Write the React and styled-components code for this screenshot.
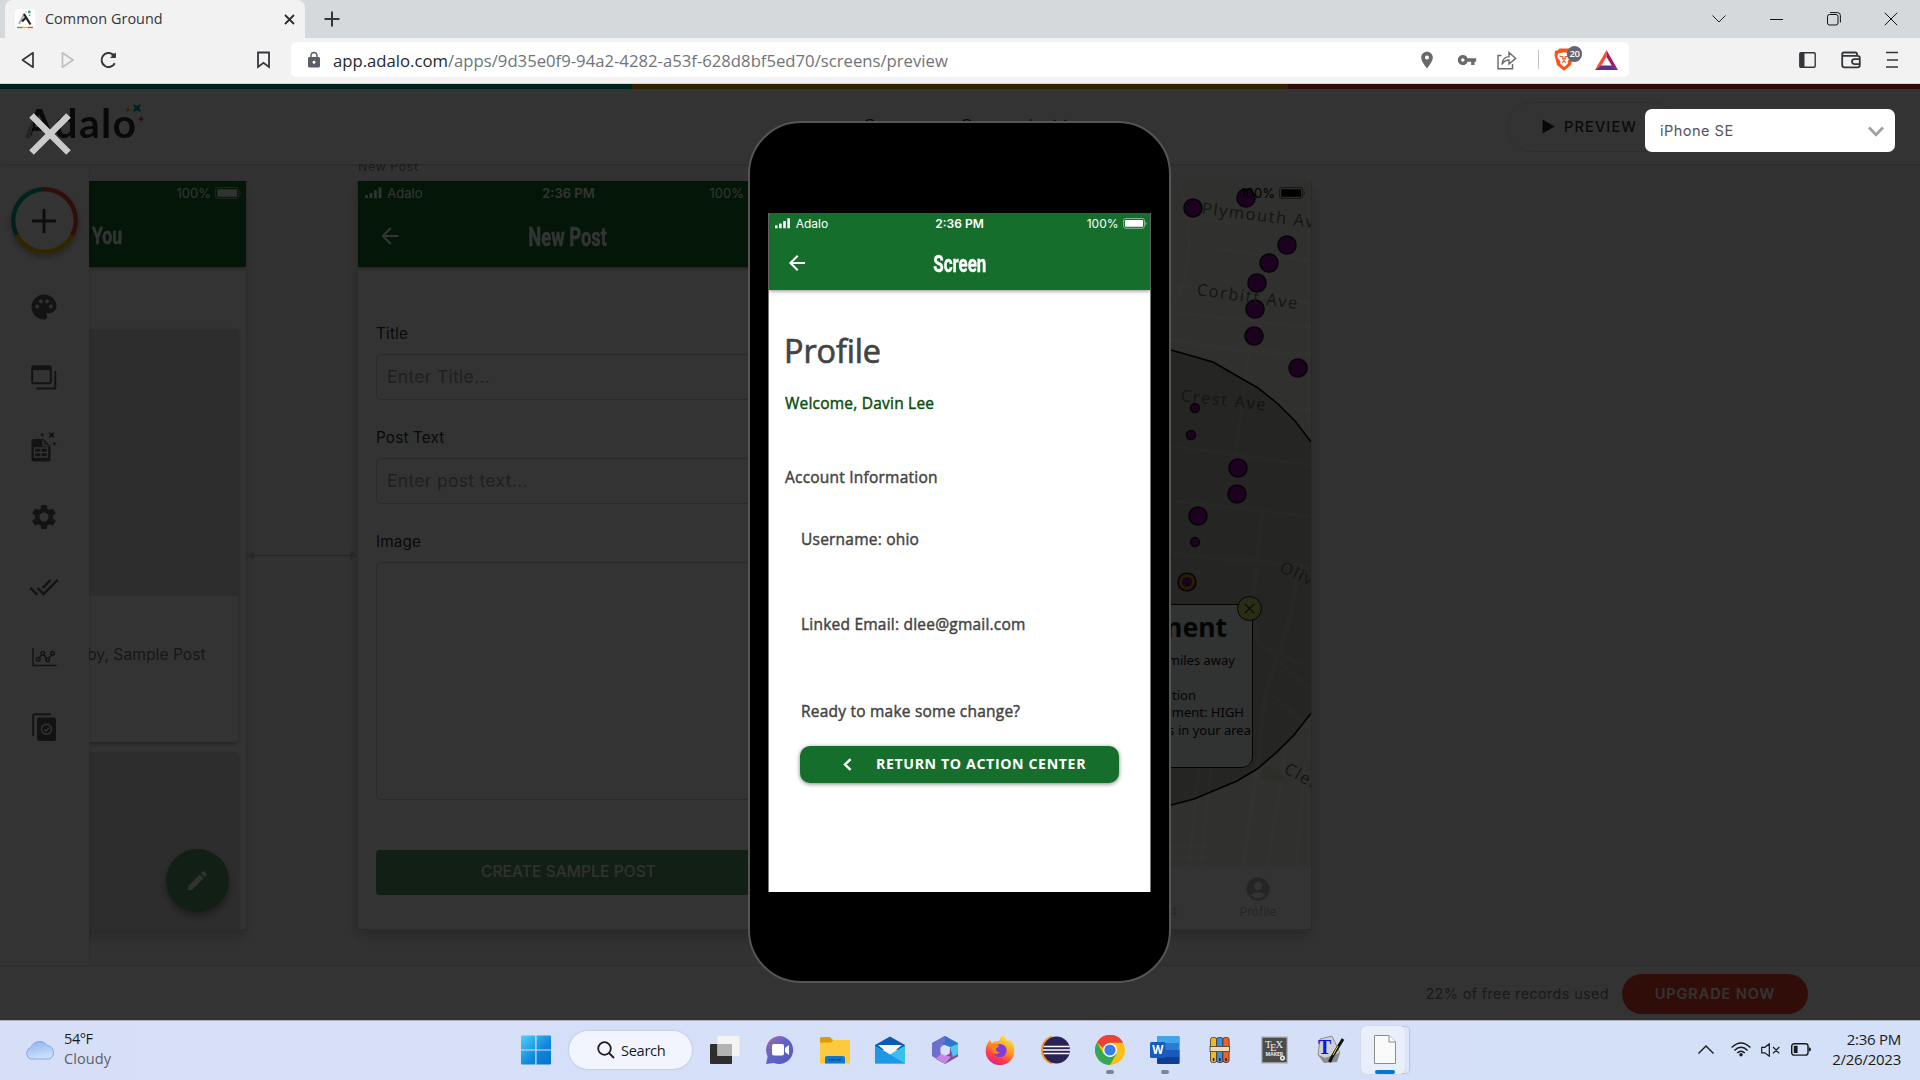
import styled, { createGlobalStyle } from "styled-components";
import {
  MdPalette,
  MdSettings,
  MdDoneAll,
  MdEdit,
  MdAccountCircle,
  MdArrowBack,
  MdLocationOn,
  MdVpnKey,
  MdLock,
} from "react-icons/md";

const GlobalStyle = createGlobalStyle`
  * {
    box-sizing: border-box;
  }
  body {
    margin: 0;
    overflow: hidden;
    font-family: "Open Sans", "Noto Sans", sans-serif;
  }
  svg {
    display: block;
    flex: none;
  }
`;

const Page = styled.div`
  width: 1920px;
  height: 1080px;
  display: flex;
  flex-direction: column;
  overflow: hidden;
`;

/* ---------- text ---------- */

const Text = styled.span`
  font-size: ${(p) => p.$size || 15}px;
  font-weight: ${(p) => p.$weight || 400};
  letter-spacing: ${(p) => p.$spacing || 0}px;
  color: ${(p) => p.$color || "inherit"};
  line-height: 20px;
  white-space: nowrap;
`;

/* ---------- browser ---------- */

const TabStrip = styled.div`
  height: 38px;
  flex: none;
  display: flex;
  align-items: center;
  padding-left: 5px;
  background: #d5d9dc;
`;
const Tab = styled.div`
  width: 300px;
  height: 38px;
  display: flex;
  align-items: center;
  gap: 10px;
  padding: 0 10px 0 10px;
  border-radius: 8px 8px 0 0;
  background: #f2f2f2;
  color: #33373b;
`;
const TabTitle = styled(Text)`
  flex: 1;
`;
const NewTab = styled.div`
  margin-left: 19px;
`;
const WindowButtons = styled.div`
  display: flex;
  margin-left: auto;
`;
const WindowButton = styled.div`
  width: 57.3px;
  height: 38px;
  display: flex;
  align-items: center;
  justify-content: center;
`;
const Toolbar = styled.div`
  height: 46px;
  flex: none;
  display: flex;
  align-items: center;
  padding: 0 22px 2px 20px;
  background: #f2f2f2;
  border-bottom: 1px solid #d4d4d4;
`;
const NavButtons = styled.div`
  width: 271px;
  display: flex;
  align-items: center;
`;
const NavButton = styled.div`
  width: 40px;
`;
const BookmarkSlot = styled.div`
  margin-left: 136px;
`;
const AddressBar = styled.div`
  width: 1338px;
  height: 35px;
  display: flex;
  align-items: center;
  padding: 0 11px 0 14px;
  border-radius: 5px;
  background: #fff;
`;
const Url = styled(Text)`
  margin-left: 10px;
  padding-top: 2px;
  flex: 1;
`;
const AddressActions = styled.div`
  display: flex;
  align-items: center;
  gap: 20px;
  color: #6a6a6a;
`;
const Divider = styled.div`
  width: 1px;
  height: 19px;
  margin-left: 1px;
  margin-right: -5px;
  background: #c4c4c4;
`;
const Brave = styled.div`
  position: relative;
  width: 21px;
`;
const BraveBadge = styled.span`
  position: absolute;
  left: 13px;
  top: -2px;
  width: 15px;
  height: 16px;
  border-radius: 8px;
  background: #626674;
  color: #fff;
  font-size: 9.5px;
  font-weight: 600;
  line-height: 16px;
  text-align: center;
  letter-spacing: -0.5px;
`;
const ToolbarEnd = styled.div`
  display: flex;
  align-items: center;
  gap: 25px;
  margin-left: auto;
`;

/* ---------- adalo editor ---------- */

const Editor = styled.div`
  position: relative;
  height: 936px;
  flex: none;
  display: flex;
  flex-direction: column;
  overflow: hidden;
  background: #fbfbfb;
  font-family: Inter, sans-serif;
`;
const ColorStrip = styled.div`
  height: 5px;
  flex: none;
  background: linear-gradient(90deg, #00a898 632px, #f0ab00 632px 1288px, #f03a2e 1288px);
`;
const EditorHeader = styled.div`
  position: relative;
  z-index: 2;
  height: 75px;
  flex: none;
  display: flex;
  align-items: center;
  padding: 0 25px;
  background: #fff;
  box-shadow: 0 1px 3px rgba(0, 0, 0, 0.2);
`;
const Logo = styled.div`
  display: flex;
  align-items: flex-start;
  width: 837px;
`;
const LogoText = styled.span`
  font-family: Lato, sans-serif;
  font-size: 41px;
  font-weight: 700;
  line-height: 44px;
  letter-spacing: 1.3px;
  margin-top: -7px;
  color: transparent;
  background: linear-gradient(100deg, #b5b5b5 12px, #2d2d2d 12px);
  background-clip: text;
`;
const LogoSparks = styled.svg`
  margin: -4px 0 0 -13px;
`;
const AppTitle = styled.span`
  display: flex;
  align-items: center;
  gap: 19px;
  font-size: 20.5px;
  font-weight: 300;
  letter-spacing: 0.6px;
  color: #222;
`;
const PreviewButton = styled.div`
  display: flex;
  align-items: center;
  gap: 9px;
  width: 170px;
  height: 50px;
  margin-left: auto;
  padding-left: 34px;
  border: 1px solid #e4e4e4;
  border-radius: 25px;
  color: #333;
`;
const Avatar = styled.div`
  width: 36px;
  height: 36px;
  margin: 0 32px 0 150px;
  border-radius: 18px;
  background: #00a898;
`;
const EditorBody = styled.div`
  flex: 1;
  display: flex;
  min-height: 0;
`;
const Sidebar = styled.div`
  position: relative;
  z-index: 1;
  width: 89px;
  flex: none;
  display: flex;
  flex-direction: column;
  align-items: center;
  padding: 23px 2px 0 0;
  background: #fff;
  box-shadow: 1px 0 3px rgba(0, 0, 0, 0.12);
  color: #606060;
`;
const AddButton = styled.div`
  width: 67px;
  height: 67px;
  flex: none;
  display: flex;
  align-items: center;
  justify-content: center;
  margin: 0 0 18px 1px;
  border-radius: 50%;
  background:
    radial-gradient(circle, #fff 28.5px, transparent 29.5px),
    conic-gradient(#f0492e 118deg, #f5b800 118deg 242deg, #00a898 242deg);
  box-shadow: 0 3px 6px rgba(0, 0, 0, 0.35);
`;
const SideItem = styled.div`
  height: 70px;
  display: flex;
  align-items: center;
  justify-content: center;
`;
const Canvas = styled.div`
  position: relative;
  flex: 1;
  overflow: hidden;
`;
const CanvasScreen = styled.div`
  position: absolute;
  left: ${(p) => p.$x}px;
  top: 17px;
  width: ${(p) => p.$w}px;
  height: 749px;
  overflow: hidden;
  background: #fff;
  border: 1px solid #d2d2d2;
  border-top: none;
`;
const ScreenShadow = styled.div`
  position: absolute;
  left: ${(p) => p.$x}px;
  top: 17px;
  width: ${(p) => p.$w}px;
  height: 749px;
  box-shadow: 0 6px 14px rgba(0, 0, 0, 0.22);
`;
const ScreenLabel = styled.div`
  position: absolute;
  left: 269px;
  top: -7px;
  font-size: 12.4px;
  line-height: 20px;
  letter-spacing: 0.6px;
  color: #8a8a8a;
`;
const LinkArrow = styled.svg`
  position: absolute;
  left: 157px;
  top: 386px;
`;
const NavHeader = styled.div`
  height: ${(p) => p.$h}px;
  background: #166e2c;
  color: #fff;
  box-shadow: 0 1px 4px rgba(0, 0, 0, 0.45);
  position: relative;
`;
const StatusRow = styled.div`
  height: ${(p) => p.$h}px;
  display: grid;
  grid-template-columns: 1fr auto 1fr;
  align-items: center;
  padding: 0 3px 0 ${(p) => p.$pad}px;
  font-family: Inter, sans-serif;
  font-size: ${(p) => p.$size}px;
`;
const StatusTime = styled(Text)`
  margin-left: -3px;
`;
const StatusLeft = styled.div`
  display: flex;
  align-items: center;
  gap: 5px;
`;
const StatusRight = styled.div`
  display: flex;
  align-items: center;
  justify-content: flex-end;
  gap: 4px;
`;
const TitleRow = styled.div`
  height: ${(p) => p.$h}px;
  display: grid;
  grid-template-columns: 50px 1fr 50px;
  align-items: center;
  padding: 0 ${(p) => p.$pad}px;
`;
const NavTitle = styled.span`
  justify-self: center;
  padding-top: 2px;
  font-family: Roboto, sans-serif;
  font-size: ${(p) => p.$size}px;
  font-weight: 700;
  white-space: nowrap;
  transform: scaleX(0.72);
  -webkit-text-stroke: 0.4px currentColor;
`;
const FeedHeader = styled(NavHeader)`
  padding-left: 3px;
`;
const FeedTitle = styled(NavTitle)`
  display: block;
  width: max-content;
  padding-top: 16px;
  justify-self: start;
  transform-origin: left;
`;
const FeedStatus = styled.div`
  height: 24px;
  display: flex;
  align-items: center;
  justify-content: flex-end;
  gap: 4px;
  padding-right: 4px;
  font-size: 13px;
`;
const FeedCard = styled.div`
  width: 149px;
  height: ${(p) => p.$h}px;
  margin-top: ${(p) => p.$top}px;
  box-shadow: 0 2px 4px rgba(0, 0, 0, 0.35);
  border-radius: 0 4px 4px 0;
  background: #fff;
`;
const FeedImage = styled.div`
  height: ${(p) => p.$h}px;
  background: #e1e1e1;
`;
const FeedText = styled.div`
  margin: 47px 0 0 -2px;
  font-size: 15.7px;
  line-height: 24px;
  white-space: nowrap;
  color: #777;
`;
const Fab = styled.div`
  position: absolute;
  left: 77px;
  top: 668px;
  width: 63px;
  height: 63px;
  display: flex;
  align-items: center;
  justify-content: center;
  border-radius: 50%;
  background: #5c996b;
  color: #f4f4f4;
  box-shadow: 0 4px 8px rgba(0, 0, 0, 0.4);
`;
const PostForm = styled.div`
  padding: 54px 17px 0 18px;
`;
const FieldLabel = styled.div`
  height: 24px;
  margin-bottom: 9px;
  font-size: 15.3px;
  line-height: 26px;
  letter-spacing: 0.15px;
  color: #333;
`;
const Field = styled.div`
  height: ${(p) => p.$h || 46}px;
  margin-bottom: ${(p) => p.$gap || 25}px;
  padding: 0 10px;
  border: 1px solid #d0d0d0;
  border-radius: 5px;
  font-size: 17.5px;
  line-height: 44px;
  letter-spacing: 0.3px;
  color: #a0a0a0;
`;
const PostButton = styled.div`
  height: 45px;
  border-radius: 4px;
  background: #5c996b;
  color: #f4f4f4;
  font-size: 15.5px;
  font-weight: 500;
  line-height: 43px;
  letter-spacing: 0.1px;
  text-align: center;
`;
const MapArea = styled.div`
  position: relative;
  height: 686px;
  background: #eeeee6;
`;
const MapDrawing = styled.svg`
  position: absolute;
  left: 0;
  top: 0;
`;
const MapStatus = styled.div`
  position: absolute;
  right: 5px;
  top: 0;
  height: 24px;
  display: flex;
  align-items: center;
  gap: 4px;
  font-size: 13px;
  color: #000;
`;
const StreetName = styled.span`
  position: absolute;
  left: ${(p) => p.$x}px;
  top: ${(p) => p.$y}px;
  font-family: "Open Sans", sans-serif;
  font-size: 16.5px;
  line-height: 20px;
  letter-spacing: 1.6px;
  white-space: nowrap;
  color: #6c6c6c;
  transform: rotate(${(p) => p.$angle}deg);
  transform-origin: left center;
`;
const MapPopup = styled.div`
  position: absolute;
  right: 58px;
  top: 423px;
  width: 180px;
  height: 164px;
  padding-top: 5px;
  border: 1px solid #111;
  border-radius: 11px;
  background: #f2faf9;
  color: #151515;
  text-align: right;
  font-family: "Noto Sans", sans-serif;
`;
const PopupTitle = styled.div`
  height: 42px;
  padding-right: 25px;
  font-size: 26.5px;
  font-weight: 700;
  line-height: 34px;
`;
const PopupLine = styled.div`
  height: 17.6px;
  margin-bottom: ${(p) => p.$gap || 0}px;
  padding-right: ${(p) => p.$end}px;
  font-size: 13px;
  line-height: 17.6px;
  white-space: nowrap;
`;
const PopupClose = styled.div`
  position: absolute;
  right: -10px;
  top: -9px;
  width: 25px;
  height: 25px;
  display: flex;
  align-items: center;
  justify-content: center;
  border: 1px solid #111;
  border-radius: 50%;
  background: #d8dc70;
`;
const TabBar = styled.div`
  height: 62px;
  display: grid;
  grid-template-columns: 288px 158px;
  background: #fff;
  color: #bababa;
  font-size: 12px;
  line-height: 17px;
`;
const TabItem = styled.div`
  display: flex;
  flex-direction: column;
  align-items: center;
  padding-top: 8px;
  width: 105px;
  justify-self: ${(p) => p.$side || "start"};
`;
const TabTextOnly = styled(TabItem)`
  width: auto;
  padding: 35px 2px 0 0;
`;
const EditorFooter = styled.div`
  position: relative;
  z-index: 2;
  height: 55px;
  flex: none;
  display: flex;
  align-items: center;
  justify-content: flex-end;
  gap: 13px;
  padding: 1px 112px 0 0;
  border-top: 1px solid #dcdcdc;
  background: #fff;
`;
const UpgradeButton = styled.div`
  width: 186px;
  height: 40px;
  border-radius: 20px;
  background: #f04430;
  color: #fff;
  font-size: 14.6px;
  font-weight: 600;
  line-height: 40px;
  letter-spacing: 0.85px;
  text-align: center;
`;

/* ---------- preview overlay ---------- */

const Overlay = styled.div`
  position: absolute;
  inset: 0;
  z-index: 5;
  display: flex;
  align-items: center;
  justify-content: center;
  background: rgba(0, 0, 0, 0.8);
`;
const CloseButton = styled.div`
  position: absolute;
  left: 29px;
  top: 29px;
`;
const DeviceSelect = styled.div`
  position: absolute;
  right: 25px;
  top: 25px;
  width: 250px;
  height: 43px;
  display: flex;
  align-items: center;
  justify-content: space-between;
  padding: 1px 11px 0 15px;
  border-radius: 7px;
  background: #fff;
`;
const Phone = styled.div`
  width: 423px;
  height: 862px;
  margin-right: 1px;
  padding: 90px 18px 0;
  border: 2px solid #555;
  border-radius: 53px;
  background: #000;
`;
const PhoneScreen = styled.div`
  height: 679px;
  border: 1px solid #777;
  border-width: 0 1px;
  background: #fff;
`;
const ProfileBody = styled.div`
  padding: 0 16px;
  display: flex;
  flex-direction: column;
`;
const ProfileTitle = styled.div`
  margin: 36px 0 0 -1px;
  font-family: "Open Sans", sans-serif;
  font-size: 32.4px;
  line-height: 48px;
  letter-spacing: -0.1px;
  color: #444;
  -webkit-text-stroke: 0.7px currentColor;
`;
const ProfileLine = styled.div`
  margin: ${(p) => p.$top}px 0 0 ${(p) => p.$indent || 0}px;
  height: 24px;
  font-family: "Open Sans", sans-serif;
  font-size: 15.5px;
  line-height: 24px;
  letter-spacing: 0.22px;
  white-space: nowrap;
  color: ${(p) => p.$color || "#444"};
  -webkit-text-stroke: 0.45px currentColor;
`;
const ReturnButton = styled.div`
  width: 319px;
  height: 37px;
  margin: 23px 0 0 15px;
  display: flex;
  align-items: center;
  padding: 0 0 1px 43px;
  gap: 24px;
  border-radius: 10px;
  background: #166e2c;
  color: #fff;
  font-family: "Open Sans", sans-serif;
  box-shadow: 0 1px 4px rgba(0, 0, 0, 0.5);
`;

/* ---------- windows taskbar ---------- */

const Taskbar = styled.div`
  height: 60px;
  flex: none;
  display: flex;
  align-items: center;
  padding-bottom: 2px;
  border-top: 1px solid #a9aebb;
  background: linear-gradient(90deg, #d7dff7, #d3e0f8);
`;
const Weather = styled.div`
  width: 509px;
  display: flex;
  align-items: center;
  gap: 9px;
  padding-left: 25px;
`;
const TwoLines = styled.div`
  display: flex;
  flex-direction: column;
  align-items: ${(p) => p.$align || "flex-start"};
  margin-top: -1px;
  color: #1a1a1a;
`;
const StartSlot = styled.div`
  width: 60px;
  padding-left: 12px;
`;
const SearchPill = styled.div`
  width: 123px;
  height: 38px;
  display: flex;
  align-items: center;
  gap: 6px;
  padding-left: 28px;
  margin-right: 5px;
  border-radius: 19px;
  background: #f2f5fe;
  box-shadow: 0 0 1px 1px rgba(150, 160, 190, 0.25);
  color: #1a1a1a;
`;
const TaskIcon = styled.div`
  position: relative;
  width: 55px;
  height: 57px;
  display: flex;
  align-items: center;
  justify-content: center;
  &::after {
    content: "";
    position: absolute;
    bottom: 4px;
    left: 50%;
    width: ${(p) => p.$bar || 0}px;
    height: 4px;
    border-radius: 2px;
    transform: translateX(-50%);
    background: ${(p) => (p.$active ? "#0078d4" : "#7f858f")};
  }
`;
const ActiveTile = styled.div`
  width: 44px;
  height: 48px;
  display: flex;
  align-items: center;
  justify-content: center;
  padding-left: 4px;
  margin-right: 4px;
  border-radius: 5px;
  background: #e9eefb;
  box-shadow: 0 0 1px #a8b0c8, 5px 0 0 -1px #dfe7fa, 5px 0 1px 0 #b9c3dc;
`;
const Tray = styled.div`
  display: flex;
  align-items: center;
  margin-left: auto;
  padding-right: 19px;
`;
const TrayIcon = styled.div`
  margin-right: ${(p) => p.$gap}px;
`;

const Signal = ({ scale = 1 }) => (
  <svg width={16 * scale} height={11 * scale} viewBox="0 0 16 11" fill="currentColor">
    <rect x="0" y="7.5" width="2.6" height="3" rx="0.6" />
    <rect x="4.2" y="5.5" width="2.6" height="5" rx="0.6" />
    <rect x="8.4" y="3" width="2.6" height="7.5" rx="0.6" />
    <rect x="12.6" y="0.2" width="2.6" height="10.3" rx="0.6" />
  </svg>
);

const Battery = ({ scale = 1 }) => (
  <svg width={25 * scale} height={11 * scale} viewBox="0 0 25 11">
    <rect x="0.5" y="0.5" width="21.5" height="10" rx="2.5" fill="none" stroke="currentColor" strokeOpacity="0.5" />
    <rect x="2" y="2" width="18.5" height="7" rx="1.2" fill="currentColor" />
    <path d="M23 3.5 q1.8 2 0 4z" fill="currentColor" fillOpacity="0.6" />
  </svg>
);

const Status = ({ h, pad, size, scale }) => (
  <StatusRow $h={h} $pad={pad} $size={size}>
    <StatusLeft>
      <Signal scale={scale} />
      <span>Adalo</span>
    </StatusLeft>
    <StatusTime $size={size} $weight={600}>2:36 PM</StatusTime>
    <StatusRight>
      <span>100%</span>
      <Battery scale={scale} />
    </StatusRight>
  </StatusRow>
);

const Favicon = () => (
  <svg width="20" height="20" viewBox="0 0 20 20">
    <rect width="20" height="20" rx="3" fill="#fff" />
    <path d="M4 15 L9.5 4.5" stroke="#aaa" strokeWidth="1.8" />
    <path d="M9 5 L15.5 15.5 M7 12.5 L11 8.5" stroke="#222" strokeWidth="2.2" fill="none" />
    <circle cx="14.3" cy="3" r="1.4" fill="#12a99a" />
    <circle cx="11" cy="3" r="0.8" fill="#f5c451" />
    <circle cx="14.6" cy="6.4" r="0.8" fill="#f0563e" />
    <path d="M2 18.5h6" stroke="#12a99a" strokeWidth="1.4" />
    <path d="M7 18.5h6" stroke="#f5b400" strokeWidth="1.4" />
    <path d="M13 18.5h5" stroke="#f0442e" strokeWidth="1.4" />
  </svg>
);

const Browser = () => (
  <>
    <TabStrip>
      <Tab>
        <Favicon />
        <TabTitle $size={14.4} $spacing={0.05}>Common Ground</TabTitle>
        <svg width="11" height="11" viewBox="0 0 11 11" stroke="#2c2f33" strokeWidth="1.8">
          <path d="M1 1 L10 10 M10 1 L1 10" />
        </svg>
      </Tab>
      <NewTab>
        <svg width="16" height="16" viewBox="0 0 16 16" stroke="#33373b" strokeWidth="2">
          <path d="M8 0.5 V15.5 M0.5 8 H15.5" />
        </svg>
      </NewTab>
      <WindowButtons>
        <WindowButton>
          <svg width="14" height="8" viewBox="0 0 14 8" fill="none" stroke="#222">
            <path d="M0.5 0.5 L7 7 L13.5 0.5" />
          </svg>
        </WindowButton>
        <WindowButton>
          <svg width="13" height="13" viewBox="0 0 13 13" stroke="#111">
            <path d="M0 6.5 H13" />
          </svg>
        </WindowButton>
        <WindowButton>
          <svg width="14" height="14" viewBox="0 0 14 14" fill="none" stroke="#111">
            <rect x="0.5" y="2.5" width="10.5" height="10.5" rx="2" />
            <path d="M3 0.6 H10.5 Q13.4 0.6 13.4 3.5 V10.5" />
          </svg>
        </WindowButton>
        <WindowButton>
          <svg width="14" height="14" viewBox="0 0 14 14" stroke="#111">
            <path d="M0.8 0.8 L13.2 13.2 M13.2 0.8 L0.8 13.2" />
          </svg>
        </WindowButton>
      </WindowButtons>
    </TabStrip>
    <Toolbar>
      <NavButtons>
        <NavButton>
          <svg width="16" height="18" viewBox="0 0 16 18" fill="none" stroke="#33373b" strokeWidth="1.7" strokeLinejoin="round">
            <path d="M13 1.8 V16.2 L2.5 9 Z" />
          </svg>
        </NavButton>
        <NavButton>
          <svg width="16" height="18" viewBox="0 0 16 18" fill="none" stroke="#bdbfc2" strokeWidth="1.7" strokeLinejoin="round">
            <path d="M2.5 1.8 V16.2 L13 9 Z" />
          </svg>
        </NavButton>
        <svg width="18" height="18" viewBox="0 0 18 18" fill="none" stroke="#33373b" strokeWidth="2">
          <path d="M14.8 12.3 A7 7 0 1 1 13 3.6" />
          <path d="M15.8 1.2 V7 H10 Z" fill="#33373b" stroke="none" />
          <circle cx="13.8" cy="4.6" r="2.2" fill="#33373b" stroke="none" />
        </svg>
        <BookmarkSlot>
          <svg width="18" height="18" viewBox="0 0 18 18" fill="none" stroke="#33373b" strokeWidth="1.8">
            <path d="M4 1.5 H15 V16 L9.5 11.8 L4 16 Z" />
          </svg>
        </BookmarkSlot>
      </NavButtons>
      <AddressBar>
        <MdLock size={18} color="#5b5e66" />
        <Url $size={16.7} $color="#707478">
          <Text $size={16.7} $color="#25282c">app.adalo.com</Text>
          /apps/9d35e0f9-94a2-4282-a53f-628d8bf5ed70/screens/preview
        </Url>
        <AddressActions>
          <MdLocationOn size={20} />
          <MdVpnKey size={20} />
          <svg width="20" height="20" viewBox="0 0 20 20" fill="none" stroke="#6a6a6a" strokeWidth="1.4">
            <path d="M4.5 5.5 H1 V18.7 H15.5 V14" />
            <path d="M5 14.5 C5.5 9 8.5 6.8 12 6.6 V2.5 L18.7 8.4 L12 14 V10 C9 10 6.8 11.5 5 14.5Z" />
          </svg>
          <Divider />
          <Brave>
            <svg width="20" height="23" viewBox="0 0 20 23">
              <path d="M5.5 0.5 H14.5 L16.5 2.6 L19 2.8 L19.5 7 L17 17 L10 22.7 L3 17 L0.5 7 L1 2.8 L3.5 2.6Z" fill="#fb5316" />
              <path d="M4 5.5 L10 4.2 L16 5.5 L16.8 9 L13.5 13.5 L14 15.5 L10 19 L6 15.5 L6.5 13.5 L3.2 9Z" fill="#fff" />
              <path d="M5.5 8 L9 9 L8.6 11.5 M14.5 8 L11 9 L11.4 11.5 M8 14.6 L10 13 L12 14.6 M10 10 V13" stroke="#fb5316" strokeWidth="1.1" fill="none" />
            </svg>
            <BraveBadge>20</BraveBadge>
          </Brave>
          <svg width="23" height="20" viewBox="0 0 23 20">
            <path d="M11.5 0 L0 20 L6 16 L11.5 7 Z" fill="#ff4b2b" />
            <path d="M11.5 0 L23 20 L17 16 L11.5 7 Z" fill="#9e1f63" />
            <path d="M0 20 H23 L17 15.5 H6 Z" fill="#662d91" />
          </svg>
        </AddressActions>
      </AddressBar>
      <ToolbarEnd>
        <svg width="17" height="16" viewBox="0 0 17 16">
          <rect x="0.8" y="0.8" width="15.4" height="14.4" rx="1" fill="none" stroke="#33373b" strokeWidth="1.4" />
          <rect x="1" y="1" width="4.5" height="14" fill="#33373b" />
        </svg>
        <svg width="20" height="18" viewBox="0 0 20 18" fill="none" stroke="#33373b" strokeWidth="1.8">
          <path d="M16 4.8 V3 Q16 1.5 14.5 1.5 H2.8 Q1.2 1.5 1.2 3.2 Q1.2 4.8 2.8 4.8 H16.5 Q18.8 4.8 18.8 7 V14 Q18.8 16.3 16.5 16.3 H3.5 Q1.2 16.3 1.2 14 V3" />
          <path d="M18.8 8.2 H13.5 A2.5 2.5 0 0 0 13.5 13.2 H18.8" />
        </svg>
        <svg width="12" height="18" viewBox="0 0 12 18" stroke="#33373b" strokeWidth="1.7">
          <path d="M0 1.5 H12 M1 9 H12 M0 16 H12" />
        </svg>
      </ToolbarEnd>
    </Toolbar>
  </>
);

const sideIcons = [
  <MdPalette size={30} />,
  <svg width="26" height="25" viewBox="0 0 26 25" fill="none" stroke="currentColor" strokeWidth="2">
    <rect x="1.2" y="1.2" width="18.6" height="17" rx="1.5" />
    <path d="M1.2 3.2 H19.8" strokeWidth="4" />
    <path d="M5.5 23.5 H24.3 V6" />
  </svg>,
  <svg width="26" height="30" viewBox="0 0 26 30" fill="currentColor">
    <path d="M0.5 9.5 Q0.5 7 2.5 7 H12.5 L19.5 14 V27.5 Q19.5 29.5 17.5 29.5 H2.5 Q0.5 29.5 0.5 27.5Z" />
    <path d="M12 8.5 V14 H18" stroke="#fff" strokeWidth="1.2" fill="#fff" fillOpacity="0.5" />
    <path d="M3.5 16 H16.5 V25 H3.5Z M10 16 V25 M3.5 20.5 H16.5" stroke="#fff" strokeWidth="1.3" fill="none" />
    <path d="M17.5 0 L20.5 1.3 L23.5 0 L22.2 3 L23.5 6 L20.5 4.7 L17.5 6 L18.8 3Z" />
    <path d="M11 1 L12 2 L13 3 L12 4 L11 5 L10.4 3.4 L9.5 3Z M23.5 9.5 L24.2 11 L25.8 11.8 L24 12.5 L23.4 14 L22.5 12.3 L21.5 11.6Z" />
  </svg>,
  <MdSettings size={30} />,
  <MdDoneAll size={30} />,
  <svg width="26" height="20" viewBox="0 0 26 20" fill="none" stroke="currentColor" strokeWidth="1.5">
    <path d="M2 1 V18.5 H25.5" />
    <path d="M8 11 L11 7.5 M13 8 L15.5 11.5 M18 11 L21 7.5" />
    <circle cx="7.2" cy="12.3" r="1.8" />
    <circle cx="11.8" cy="6.3" r="1.8" />
    <circle cx="16.6" cy="12.8" r="1.8" />
    <circle cx="21.6" cy="6.3" r="1.8" />
  </svg>,
  <svg width="24" height="28" viewBox="0 0 24 28">
    <path d="M1.2 23 V3 Q1.2 1.2 3 1.2 H19" fill="none" stroke="currentColor" strokeWidth="2" />
    <rect x="5" y="4.5" width="19" height="23.5" rx="2" fill="currentColor" />
    <circle cx="14.5" cy="16.2" r="5" fill="none" stroke="#fff" strokeWidth="1.4" />
    <path d="M12.2 16.2 L14 18 L17 14.8" fill="none" stroke="#fff" strokeWidth="1.4" />
  </svg>,
];

// [x, y, r] inside the map screen
const dots = [
  [302, 27, 9], [355, 17, 9], [396, 64, 9], [378, 82, 9], [366, 102, 9], [364, 128, 9],
  [363, 155, 9], [407, 187, 9], [304, 227, 4.5], [300, 254, 4.5], [347, 287, 9],
  [346, 313, 9], [307, 335, 9], [304, 361, 4.5],
];

const MapScreen = () => (
  <CanvasScreen $x={801} $w={422}>
    <MapArea>
      <MapDrawing width="421" height="686" viewBox="0 0 421 686" fill="none">
        <g stroke="#fafaf5" strokeWidth="2.5">
          <path d="M288 0 Q302 50 297 75 Q295 105 280 125" />
          <path d="M270 34 L340 42 M322 68 L421 80 M270 102 L421 122 M270 130 L421 147" />
          <path d="M270 156 Q330 170 421 174" strokeWidth="4" />
          <path d="M358 172 L345 272 M390 228 H421 M270 264 L421 284 M270 318 L421 336" />
          <path d="M270 372 L421 386" strokeWidth="5" />
          <path d="M371 330 L362 420 L366 460 M407 390 Q398 450 388 470 L374 515 L366 590 L352 686" strokeWidth="4" />
          <path d="M360 455 L421 510 M378 468 L421 488 M378 510 L421 550 M395 570 L376 686 M414 585 L405 686 M320 587 L310 686 M308 587 L298 686" />
          <path d="M270 666 H320 M270 676 H318" />
        </g>
        <path d="M372 584 L392 592 L392 600 L370 598Z" fill="#dfe5c4" />
        <path
          d="M200 172 L245 164 L280 169 L322 181 L367 207 L387 223 L404 240 L421 262 L445 330 L450 400 L440 480 L421 531 L403 554 L386 571 L366 588 L346 600 L303 618 L265 628 L200 620Z"
          fill="#000"
          fillOpacity="0.22"
          stroke="#000"
          strokeWidth="1.6"
        />
        {dots.map(([x, y, r]) => (
          <circle key={`${x}-${y}`} cx={x} cy={y} r={r} fill="#8a0a9c" stroke="#2c0a30" strokeWidth="1.6" />
        ))}
        <circle cx="296" cy="401" r="8.5" fill="#7a1580" stroke="#222" strokeWidth="2.5" />
        <circle cx="296" cy="401" r="6.5" stroke="#d08a10" strokeWidth="3" />
      </MapDrawing>
      <StreetName $x={311} $y={17} $angle={7}>Plymouth Ave</StreetName>
      <StreetName $x={306} $y={98} $angle={8}>Corbitt Ave</StreetName>
      <StreetName $x={290} $y={204} $angle={6.5}>Crest Ave</StreetName>
      <StreetName $x={390} $y={375} $angle={24}>Olive</StreetName>
      <StreetName $x={395} $y={576} $angle={29}>Clem</StreetName>
      <MapStatus>
        <span>100%</span>
        <Battery scale={1.08} />
      </MapStatus>
      <MapPopup>
        <PopupTitle>ment</PopupTitle>
        <PopupLine $end={17} $gap={17}>miles away</PopupLine>
        <PopupLine $end={56}>tion</PopupLine>
        <PopupLine $end={8}>sment: HIGH</PopupLine>
        <PopupLine $end={1}>s in your area</PopupLine>
        <PopupClose>
          <svg width="11" height="11" viewBox="0 0 11 11" stroke="#222" strokeWidth="1.2">
            <path d="M0.8 0.8 L10.2 10.2 M10.2 0.8 L0.8 10.2" />
          </svg>
        </PopupClose>
      </MapPopup>
    </MapArea>
    <TabBar>
      <TabTextOnly $side="end">ct</TabTextOnly>
      <TabItem $side="center">
        <MdAccountCircle size={28} />
        Profile
      </TabItem>
    </TabBar>
  </CanvasScreen>
);

const EditorPage = () => (
  <>
    <ColorStrip />
    <EditorHeader>
      <Logo>
        <LogoText>Adalo</LogoText>
        <LogoSparks width="24" height="24" viewBox="0 0 24 24">
          <path d="M4 3 L5 5 L7 6 L5 7 L4 9 L3 7 L1 6 L3 5Z" fill="#f5b800" />
          <path d="M9 0 L13 2 L17 0 L15.5 4 L17 8 L13 6.5 L9 8 L10.5 4Z" fill="#00a898" />
          <path d="M17 12 L18 14 L20 15 L18 16 L17 19 L16 16 L14 15 L16 14Z" fill="#f0492e" />
        </LogoSparks>
      </Logo>
      <AppTitle>
        Common Ground
        <svg width="14" height="16" viewBox="0 0 14 16" fill="none" stroke="#222" strokeWidth="1.6">
          <path d="M1 1 L7 7.5 L13 1" />
        </svg>
      </AppTitle>
      <PreviewButton>
        <svg width="13" height="15" viewBox="0 0 13 15">
          <path d="M0.5 0.5 L12.8 7.5 L0.5 14.5Z" fill="#252540" />
        </svg>
        <Text $size={14.6} $weight={500} $spacing={1.1}>PREVIEW</Text>
      </PreviewButton>
      <Avatar />
    </EditorHeader>
    <EditorBody>
      <Sidebar>
        <AddButton>
          <svg width="24" height="24" viewBox="0 0 24 24" stroke="#444" strokeWidth="3">
            <path d="M12 0 V24 M0 12 H24" />
          </svg>
        </AddButton>
        {sideIcons.map((icon, i) => (
          <SideItem key={i}>{icon}</SideItem>
        ))}
      </Sidebar>
      <Canvas>
        <ScreenShadow $x={-20} $w={177} />
        <ScreenShadow $x={269} $w={418} />
        <ScreenShadow $x={802} $w={420} />
        <CanvasScreen $x={-1} $w={159}>
          <FeedHeader $h={86}>
            <FeedStatus>
              <span>100%</span>
              <Battery scale={1.08} />
            </FeedStatus>
            <FeedTitle $size={24.5}>You</FeedTitle>
          </FeedHeader>
          <FeedCard $top={62} $h={413}>
            <FeedImage $h={267} />
            <FeedText>by, Sample Post</FeedText>
          </FeedCard>
          <FeedCard $top={10} $h={190}>
            <FeedImage $h={190} />
          </FeedCard>
          <Fab>
            <MdEdit size={25} />
          </Fab>
        </CanvasScreen>
        <LinkArrow width="113" height="11" viewBox="0 0 113 11" fill="#c8c8c8" stroke="#c8c8c8">
          <path d="M4 5.5 H109" strokeWidth="1.5" />
          <path d="M0.5 5.5 L7.5 1.5 V9.5Z M112 5.5 L105 1.5 V9.5Z" />
        </LinkArrow>
        <ScreenLabel>New Post</ScreenLabel>
        <CanvasScreen $x={268} $w={422}>
          <NavHeader $h={86}>
            <Status h={24} pad={7} size={13} scale={1.08} />
            <TitleRow $h={62} $pad={19}>
              <MdArrowBack size={26} />
              <NavTitle $size={25.5}>New Post</NavTitle>
            </TitleRow>
          </NavHeader>
          <PostForm>
            <FieldLabel>Title</FieldLabel>
            <Field>Enter Title...</Field>
            <FieldLabel>Post Text</FieldLabel>
            <Field>Enter post text...</Field>
            <FieldLabel>Image</FieldLabel>
            <Field $h={238} $gap={50} />
            <PostButton>CREATE SAMPLE POST</PostButton>
          </PostForm>
        </CanvasScreen>
        <MapScreen />
      </Canvas>
    </EditorBody>
    <EditorFooter>
      <Text $size={14.4} $spacing={0.38} $color="#808080">22% of free records used</Text>
      <UpgradeButton>UPGRADE NOW</UpgradeButton>
    </EditorFooter>
  </>
);

const Preview = () => (
  <Overlay>
    <CloseButton>
      <svg width="42" height="42" viewBox="0 0 42 42" stroke="#cbcbcb" strokeWidth="6.5">
        <path d="M2.5 2.5 L39.5 39.5 M39.5 2.5 L2.5 39.5" />
      </svg>
    </CloseButton>
    <DeviceSelect>
      <Text $size={14.6} $spacing={0.45} $color="#555">iPhone SE</Text>
      <svg width="16" height="11" viewBox="0 0 16 11" fill="none" stroke="#a0a0a0" strokeWidth="2.8">
        <path d="M1 1.5 L8 8.8 L15 1.5" />
      </svg>
    </DeviceSelect>
    <Phone>
      <PhoneScreen>
        <NavHeader $h={77}>
          <Status h={21} pad={6} size={12} scale={0.98} />
          <TitleRow $h={57} $pad={16}>
            <MdArrowBack size={24} />
            <NavTitle $size={23.5}>Screen</NavTitle>
          </TitleRow>
        </NavHeader>
        <ProfileBody>
          <ProfileTitle>Profile</ProfileTitle>
          <ProfileLine $top={17} $color="#0c4d10">Welcome, Davin Lee</ProfileLine>
          <ProfileLine $top={50}>Account Information</ProfileLine>
          <ProfileLine $top={38} $indent={16}>Username: ohio</ProfileLine>
          <ProfileLine $top={61} $indent={16}>Linked Email: dlee@gmail.com</ProfileLine>
          <ProfileLine $top={63} $indent={16}>Ready to make some change?</ProfileLine>
          <ReturnButton>
            <svg width="9" height="13" viewBox="0 0 9 13" fill="none" stroke="#fff" strokeWidth="2.4">
              <path d="M7.6 1.2 L2 6.5 L7.6 11.8" />
            </svg>
            <Text $size={14.2} $weight={700} $spacing={0.6}>RETURN TO ACTION CENTER</Text>
          </ReturnButton>
        </ProfileBody>
      </PhoneScreen>
    </Phone>
  </Overlay>
);

const ChatIcon = () => (
  <svg width="30" height="30" viewBox="0 0 30 30">
    <defs>
      <linearGradient id="chat" x1="0" y1="0" x2="1" y2="1">
        <stop offset="0" stopColor="#a86a9c" />
        <stop offset="0.45" stopColor="#6263c9" />
        <stop offset="1" stopColor="#5558c0" />
      </linearGradient>
    </defs>
    <path d="M15 1 A14 14 0 1 1 9 28 L1 29 L2.6 21.5 A14 14 0 0 1 15 1Z" fill="url(#chat)" />
    <rect x="7" y="9" width="12" height="11.5" rx="2" fill="#fff" />
    <path d="M20 13 L24 10 V20 L20 17Z" fill="#fff" />
  </svg>
);

const FolderIcon = () => (
  <svg width="30" height="28" viewBox="0 0 30 28">
    <path d="M0 2.5 Q0 1 1.5 1 H10 L13 4 H28 V12 H0Z" fill="#dd9c06" />
    <path d="M0 6.5 H11 L13.5 4 H30 V27.5 H0Z" fill="#fcca3c" />
    <path d="M5 27.5 V22 Q5 20 7 20 H23 Q25 20 25 22 V27.5Z" fill="#1277cb" />
    <path d="M8.5 23.8 H21.5" stroke="#0b4c92" strokeWidth="1.3" />
  </svg>
);

const MailIcon = () => (
  <svg width="30" height="28" viewBox="0 0 30 28">
    <path d="M0 9 L15 0.5 L30 9 V14 H0Z" fill="#0b5cab" />
    <path d="M3 9 H27 L15 19Z" fill="#f5f5f5" />
    <path d="M30 9.5 V27.5 H0Z" fill="#36c0f0" />
    <path d="M0 9.5 L30 27.5 H0Z" fill="#1f97e2" />
  </svg>
);

const OfficeIcon = () => (
  <svg width="28" height="28" viewBox="0 0 28 28">
    <path d="M14 0 L1 7 V20 L8 24 L10 22 V11 L17 6 V1.5Z" fill="#7b80d3" />
    <path d="M14 0 L27 7 V20 L19 16 V11 L11 8 V1.5Z" fill="#2f74cf" />
    <path d="M27 17 V20.5 L14 28 L5 23 L13 21 L18.5 17.5 L19 12Z" fill="#7d4f9f" />
    <path d="M12 1 L2 6.5 Q1 7 1 9 V19 Q1 20 2 20.5 L6 23 L9.5 18 V9 L14 6 V0Z" fill="#6c70cc" />
    <path d="M19 11 L27 8 V18 L22 21Z" fill="#4cc7f3" />
    <path d="M5 22.5 L10 18 L14 19.5 L20 20.5 L14 28Z" fill="#c486e0" />
    <path d="M14 9.3 L18.5 11.8 V16.8 L14 19.2 L9.5 16.8 V11.8Z" fill="#d7e0f7" />
  </svg>
);

const FirefoxIcon = () => (
  <svg width="30" height="30" viewBox="0 0 30 30">
    <defs>
      <linearGradient id="fox" x1="0.8" y1="0" x2="0.3" y2="1">
        <stop offset="0" stopColor="#fff04a" />
        <stop offset="0.45" stopColor="#ff9a1f" />
        <stop offset="0.75" stopColor="#ff3d4a" />
        <stop offset="1" stopColor="#e0218a" />
      </linearGradient>
    </defs>
    <path d="M5 5 L7 8 Q11 5.5 14 6 Q15 2 19 0 Q20 4 24 6.5 L25 4.5 Q30 10 29.3 17 A14.3 13.5 0 0 1 0.7 16 Q0.5 10 5 5Z" fill="url(#fox)" />
    <circle cx="15" cy="15.5" r="6.6" fill="#7a3fd8" />
    <path d="M7 9 Q12 8.5 14.5 11 L11 13.5 Q10.5 17 15 17.5 Q10 21 6.5 16Z" fill="#ff7d23" />
  </svg>
);

const EclipseIcon = () => (
  <svg width="30" height="28" viewBox="0 0 30 28">
    <path d="M12 0.5 A14 14 0 0 0 12 27.5 A16 16 0 0 1 12 0.5Z" fill="#f7941e" stroke="#f7941e" strokeWidth="1.6" />
    <circle cx="16.5" cy="14" r="13.5" fill="#2c2255" />
    <path d="M3.5 10.5 H29.5 M3 14 H30 M3.5 17.5 H29.5" stroke="#fff" strokeWidth="1.7" />
  </svg>
);

const ChromeIcon = () => (
  <svg width="30" height="30" viewBox="0 0 30 30">
    <circle cx="15" cy="15" r="15" fill="#fbc116" />
    <path d="M15 15 L2 7.5 A15 15 0 0 1 28 7.5 H15Z" fill="#ea4335" />
    <path d="M2 7.5 A15 15 0 0 0 15 30 L21.5 18.8 L15 15 L8.5 18.8Z" fill="#34a853" />
    <path d="M2 7.5 A15 15 0 0 1 28 7.5 H15 A7.5 7.5 0 0 0 8 13Z" fill="#ea4335" />
    <circle cx="15" cy="15" r="7" fill="#fff" />
    <circle cx="15" cy="15" r="5.6" fill="#3b7ded" />
  </svg>
);

const WordIcon = () => (
  <svg width="30" height="28" viewBox="0 0 30 28">
    <rect x="7" y="0" width="22.5" height="28" rx="1.5" fill="#2b7cd3" />
    <path d="M7 1.5 Q7 0 8.5 0 H28 Q29.5 0 29.5 1.5 V7 H7Z" fill="#41a5ee" />
    <rect x="7" y="14" width="22.5" height="7" fill="#185abd" />
    <path d="M7 21 H29.5 V26.5 Q29.5 28 28 28 H8.5 Q7 28 7 26.5Z" fill="#103f91" />
    <rect x="0" y="6" width="15.5" height="16" rx="1.5" fill="#185abd" />
    <text x="7.7" y="18.3" fontSize="11.5" fontWeight="700" fill="#fff" textAnchor="middle">W</text>
  </svg>
);

const ArchiveIcon = () => (
  <svg width="26" height="28" viewBox="0 0 26 28">
    <rect x="3.5" y="1.5" width="6.2" height="25" rx="2" fill="#f5b81c" stroke="#333" strokeWidth="0.8" />
    <rect x="9.7" y="1.5" width="6.2" height="25" rx="2" fill="#3f8ede" stroke="#333" strokeWidth="0.8" />
    <rect x="15.9" y="1.5" width="6.2" height="25" rx="2" fill="#f0602a" stroke="#333" strokeWidth="0.8" />
    <rect x="3" y="10.5" width="19.6" height="5" fill="#efd9b5" stroke="#5b4630" strokeWidth="0.9" />
    <path d="M6.6 22 V25 M12.8 22 V25 M19 22 V25" stroke="#222" strokeWidth="1.6" />
  </svg>
);

const TexmakerIcon = () => (
  <svg width="27" height="28" viewBox="0 0 27 28">
    <rect x="0.7" y="1" width="25.6" height="26" fill="#4c4c4c" stroke="#b8b8b8" strokeWidth="1.4" />
    <g fill="#ececec" fontFamily="Liberation Serif, serif">
      <text x="4" y="11.5" fontSize="10.5">T</text>
      <text x="9" y="14.5" fontSize="10.5">E</text>
      <text x="14.5" y="11.5" fontSize="10.5">X</text>
    </g>
    <text x="4.5" y="19.5" fontSize="5" fontWeight="700" fill="#ececec">MAKER</text>
    <circle cx="21.5" cy="22" r="1.8" fill="none" stroke="#ececec" strokeWidth="1.5" />
  </svg>
);

const TexworksIcon = () => (
  <svg width="30" height="30" viewBox="0 0 30 30">
    <path d="M5 4 L17 1 L25 18 L10 24 L3 20Z" fill="#d0d0d3" stroke="#8c8c90" />
    <path d="M3 20 L10 23 L25 18 L22 27 L9 28Z" fill="#8b8b90" />
    <text x="3" y="19" fontSize="20" fontWeight="700" fill="#1414dc" fontFamily="Liberation Serif, serif">T</text>
    <path d="M28 4 L17 22 L14.5 27" stroke="#111" strokeWidth="3" fill="none" />
    <path d="M23 11 L18 20" stroke="#e6d24a" strokeWidth="1" />
  </svg>
);

const WindowsTaskbar = () => (
  <Taskbar>
    <Weather>
      <svg width="30" height="21" viewBox="0 0 30 21">
        <defs>
          <linearGradient id="cloud" x1="0" y1="0" x2="0.3" y2="1">
            <stop offset="0" stopColor="#8cb2ee" />
            <stop offset="1" stopColor="#cadffb" />
          </linearGradient>
        </defs>
        <path d="M6 20 A6 6 0 0 1 6 8.5 A9 9 0 0 1 22 6.5 A7 7 0 0 1 24 20Z" fill="url(#cloud)" stroke="#86a9e6" />
      </svg>
      <TwoLines>
        <Text $size={14.5} $spacing={-0.4}>54°F</Text>
        <Text $size={14.5} $spacing={0.1} $color="#5b606b">Cloudy</Text>
      </TwoLines>
    </Weather>
    <StartSlot>
      <svg width="30" height="30" viewBox="0 0 30 30">
        <defs>
          <linearGradient id="win" x1="0" y1="0" x2="1" y2="1">
            <stop offset="0" stopColor="#4fd0fc" />
            <stop offset="0.6" stopColor="#0f86db" />
            <stop offset="1" stopColor="#0573cd" />
          </linearGradient>
        </defs>
        <path d="M0 1.5 Q0 0.5 1 0.5 H14.3 V14.4 H0Z M15.5 0.5 H29 Q30 0.5 30 1.5 V14.4 H15.5Z M0 15.6 H14.3 V29.5 H1 Q0 29.5 0 28.5Z M15.5 15.6 H30 V28.5 Q30 29.5 29 29.5 H15.5Z" fill="url(#win)" />
      </svg>
    </StartSlot>
    <SearchPill>
      <svg width="18" height="18" viewBox="0 0 18 18" fill="none" stroke="#1c1c1c" strokeWidth="1.8">
        <circle cx="7.5" cy="7.5" r="6.3" />
        <path d="M12 12 L17 17" />
      </svg>
      <Text $size={14.6} $spacing={-0.3}>Search</Text>
    </SearchPill>
    <TaskIcon>
      <svg width="30" height="28" viewBox="0 0 30 28">
        <rect x="0" y="8" width="22" height="20" rx="1" fill="#2e2e2e" />
        <rect x="7.5" y="0" width="22" height="20" rx="1" fill="#f4f4f4" />
        <rect x="7.5" y="8" width="14.5" height="12" fill="#b3b3b3" />
      </svg>
    </TaskIcon>
    <TaskIcon><ChatIcon /></TaskIcon>
    <TaskIcon><FolderIcon /></TaskIcon>
    <TaskIcon><MailIcon /></TaskIcon>
    <TaskIcon><OfficeIcon /></TaskIcon>
    <TaskIcon><FirefoxIcon /></TaskIcon>
    <TaskIcon><EclipseIcon /></TaskIcon>
    <TaskIcon $bar={8}><ChromeIcon /></TaskIcon>
    <TaskIcon $bar={8}><WordIcon /></TaskIcon>
    <TaskIcon><ArchiveIcon /></TaskIcon>
    <TaskIcon><TexmakerIcon /></TaskIcon>
    <TaskIcon><TexworksIcon /></TaskIcon>
    <TaskIcon $bar={20} $active>
      <ActiveTile>
        <svg width="22" height="29" viewBox="0 0 22 29" fill="#fafafa" stroke="#8c8c8c">
          <path d="M0.5 0.5 H15 L21.5 7 V28.5 H0.5Z" />
          <path d="M15 0.5 V7 H21.5" />
        </svg>
      </ActiveTile>
    </TaskIcon>
    <Tray>
      <TrayIcon $gap={17}>
        <svg width="16" height="9" viewBox="0 0 16 9" fill="none" stroke="#1a1a1a" strokeWidth="1.4">
          <path d="M0.5 8.5 L8 1 L15.5 8.5" />
        </svg>
      </TrayIcon>
      <TrayIcon $gap={10}>
        <svg width="20" height="15" viewBox="0 0 20 15" fill="none" stroke="#1a1a1a" strokeWidth="1.4">
          <path d="M0.6 5.6 Q10 -3.4 19.4 5.6 M3.4 8.4 Q10 2 16.6 8.4 M6.2 11 Q10 7.4 13.8 11" />
          <circle cx="10" cy="12.8" r="1.7" fill="#1a1a1a" stroke="none" />
        </svg>
      </TrayIcon>
      <TrayIcon $gap={11}>
        <svg width="19" height="14" viewBox="0 0 19 14" fill="none" stroke="#1a1a1a" strokeWidth="1.2">
          <path d="M0.7 4.3 H3.8 L8.3 0.8 V13.2 L3.8 9.8 H0.7Z M12 4 L18.3 10.3 M18.3 4 L12 10.3" />
        </svg>
      </TrayIcon>
      <TrayIcon $gap={21}>
        <svg width="20" height="13" viewBox="0 0 20 13">
          <rect x="0.7" y="0.7" width="16.3" height="11.4" rx="2.4" fill="none" stroke="#1a1a1a" strokeWidth="1.4" />
          <rect x="2.8" y="2.8" width="3.8" height="7.2" fill="#1a1a1a" />
          <path d="M17.8 4.3 Q20 4.3 20 6.5 Q20 8.6 17.8 8.6Z" fill="#1a1a1a" />
        </svg>
      </TrayIcon>
      <TwoLines $align="flex-end">
        <Text $size={15} $spacing={-0.25}>2:36 PM</Text>
        <Text $size={15} $spacing={-0.25}>2/26/2023</Text>
      </TwoLines>
    </Tray>
  </Taskbar>
);

const App = () => (
  <Page>
    <GlobalStyle />
    <Browser />
    <Editor>
      <EditorPage />
      <Preview />
    </Editor>
    <WindowsTaskbar />
  </Page>
);

export default App;
